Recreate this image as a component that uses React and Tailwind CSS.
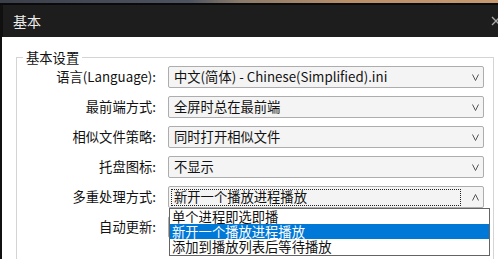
import React from "react";

const FONT = { fontFamily: '"Noto Sans CJK SC", "Noto Sans", sans-serif' };

function Arrow({ up }) {
  return (
    <svg width="7" height="7" viewBox="0 0 7 7" className="shrink-0">
      {up ? (
        <polyline points="0.5,6.5 3.5,0.5 6.5,6.5" fill="none" stroke="#555" strokeWidth="1" />
      ) : (
        <polyline points="0.5,0.5 3.5,6.5 6.5,0.5" fill="none" stroke="#555" strokeWidth="1" />
      )}
    </svg>
  );
}

function Select({ value, focused, up }) {
  return (
    <div className="h-[22px] border border-[#adadad] rounded-[2px] bg-[#f4f4f4] flex items-center pl-[2px] pr-[4px]">
      <div
        className={
          "flex-1 h-[17px] flex items-center pl-[2px] mr-[11px] " +
          (focused ? "border border-dotted border-[#222]" : "border border-transparent")
        }
      >
        <span className="text-[13.3px] leading-none text-[#111] whitespace-nowrap">{value}</span>
      </div>
      <Arrow up={up} />
    </div>
  );
}

const rows = [
  ["语言(Language):", "中文(简体) - Chinese(Simplified).ini"],
  ["最前端方式:", "全屏时总在最前端"],
  ["相似文件策略:", "同时打开相似文件"],
  ["托盘图标:", "不显示"],
  ["多重处理方式:", "新开一个播放进程播放", true],
  ["自动更新:", ""],
];

export default function App() {
  return (
    <div className="relative w-[498px] h-[259px] overflow-hidden bg-[#101010] flex flex-col" style={FONT}>
      <div className="shrink-0 h-[3px] bg-[linear-gradient(90deg,#3a3f4a_0%,#4e5360_38%,#8a7a6a_48%,#b98f6a_70%,#c79a70_100%)]" />
      <div className="shrink-0 h-[2px] bg-[#0a0a0a]" />
      <div className="shrink-0 h-[32px] bg-[#1d1d1d] flex items-center pl-[10px] ml-[3px]">
        <span className="text-[14px] text-[#ececec] leading-none">基本</span>
        <svg width="10" height="10" viewBox="0 0 10 10" className="ml-auto mr-[-3px]">
          <path d="M1 1 L9 9 M9 1 L1 9" stroke="#a8a8a8" strokeWidth="1.3" />
        </svg>
      </div>
      <div className="flex-1 min-h-0 flex overflow-hidden">
        <div className="w-[3px] bg-[#111]" />
        <div className="flex-1 bg-white pt-[12px] pl-[14px] pr-[4px]">
          <fieldset className="border border-[#d4d4d4] pb-[40px] pl-0 pr-[9px]">
            <legend className="ml-[6px] px-[3px] text-[13.3px] leading-[17px] text-[#111]">基本设置</legend>
            <div className="grid grid-cols-[139px_316px] gap-x-[12px] gap-y-[8px]">
              {rows.map(([label, value, focused]) => (
                <React.Fragment key={label}>
                  <div className="flex items-center justify-end text-[13.3px] text-[#111] whitespace-nowrap">
                    {label}
                  </div>
                  <Select value={value} focused={focused} up={focused} />
                </React.Fragment>
              ))}
            </div>
          </fieldset>
        </div>
      </div>
      <div className="absolute left-[169px] top-[208px] w-[321px] h-[48px] bg-white border border-[#646464] flex flex-col text-[13.3px] leading-[15px] text-[#111]">
        <div className="h-[15px] pl-[2px] whitespace-nowrap">单个进程即选即播</div>
        <div className="h-[15px] pl-[2px] whitespace-nowrap bg-[#0078d7] text-white">新开一个播放进程播放</div>
        <div className="h-[15px] pl-[2px] whitespace-nowrap">添加到播放列表后等待播放</div>
      </div>
    </div>
  );
}
